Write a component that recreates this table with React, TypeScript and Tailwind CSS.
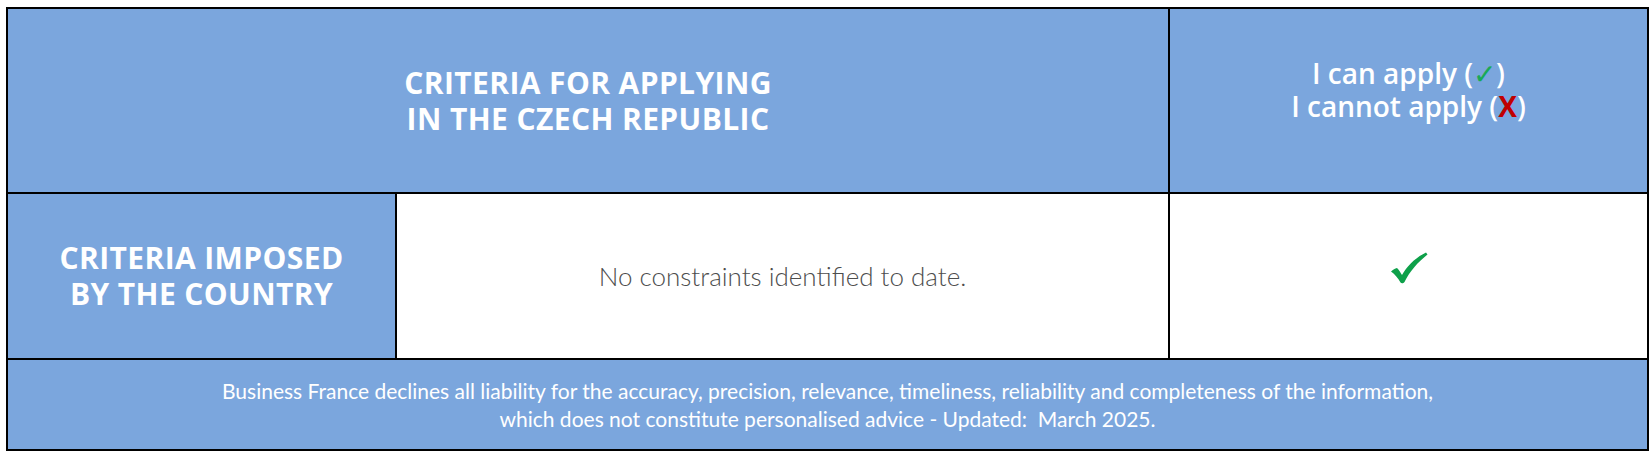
const blue = "bg-[#7ba6dd]";

function BigCheck() {
  return (
    <svg width="38" height="32" viewBox="0 0 38 32" aria-hidden="true">
      <path
        d="M1 19.5 C3 17.5 5 16.5 7 16 C9 18 10.5 20.5 12 23 C17 14 25 6 36 0.5 L37.5 2.5 C28 10 20 19 14.5 30 C13.5 31.5 11.5 31.8 10.5 30.5 C8 26 5 22.5 1 19.5 Z"
        fill="#0ea04a"
      />
    </svg>
  );
}

export default function App() {
  return (
    <div className="w-[1651px] h-[453px] bg-white pt-[7px] pl-[6px]">
      <div className="w-[1643px] border-2 border-black">
        {/* header */}
        <div className="flex h-[185px] border-b-2 border-black">
          <div
            className={`${blue} w-[1162px] border-r-2 border-black flex flex-col items-center justify-center text-center text-white font-bold text-[30px] tracking-[0.4px] leading-[36px] font-['Open_Sans',sans-serif]`}
          >
            <div>CRITERIA FOR APPLYING</div>
            <div>IN THE CZECH REPUBLIC</div>
          </div>
          <div
            className={`${blue} flex-1 flex flex-col items-center justify-center pb-[22px] text-center text-white font-semibold text-[28px] leading-[33px] font-['Open_Sans',sans-serif]`}
          >
            <div>
              I can apply (<span className="text-[#19a957] font-normal">✓</span>)
            </div>
            <div>
              I cannot apply (<span className="text-[#c00000] font-bold">X</span>)
            </div>
          </div>
        </div>

        {/* criteria row */}
        <div className="flex h-[166px] border-b-2 border-black">
          <div
            className={`${blue} w-[389px] border-r-2 border-black flex flex-col items-center justify-center text-center text-white font-bold text-[30px] tracking-[0.4px] leading-[36px] font-['Open_Sans',sans-serif]`}
          >
            <div>CRITERIA IMPOSED</div>
            <div>BY THE COUNTRY</div>
          </div>
          <div className="w-[773px] border-r-2 border-black bg-white flex items-center justify-center text-[#4d4d4d] text-[26px] font-light font-['Lato',sans-serif]">
            No constraints identified to date.
          </div>
          <div className="flex-1 bg-white flex items-center justify-center pb-[16px]">
            <BigCheck />
          </div>
        </div>

        {/* disclaimer */}
        <div
          className={`${blue} h-[89px] flex flex-col items-center justify-center text-center text-white text-[21px] leading-[28px] font-['Lato',sans-serif]`}
        >
          <p>
            Business France declines all liability for the accuracy, precision, relevance, timeliness, reliability and completeness of the information,
          </p>
          <p>which does not constitute personalised advice - Updated:&nbsp; March 2025.</p>
        </div>
      </div>
    </div>
  );
}
